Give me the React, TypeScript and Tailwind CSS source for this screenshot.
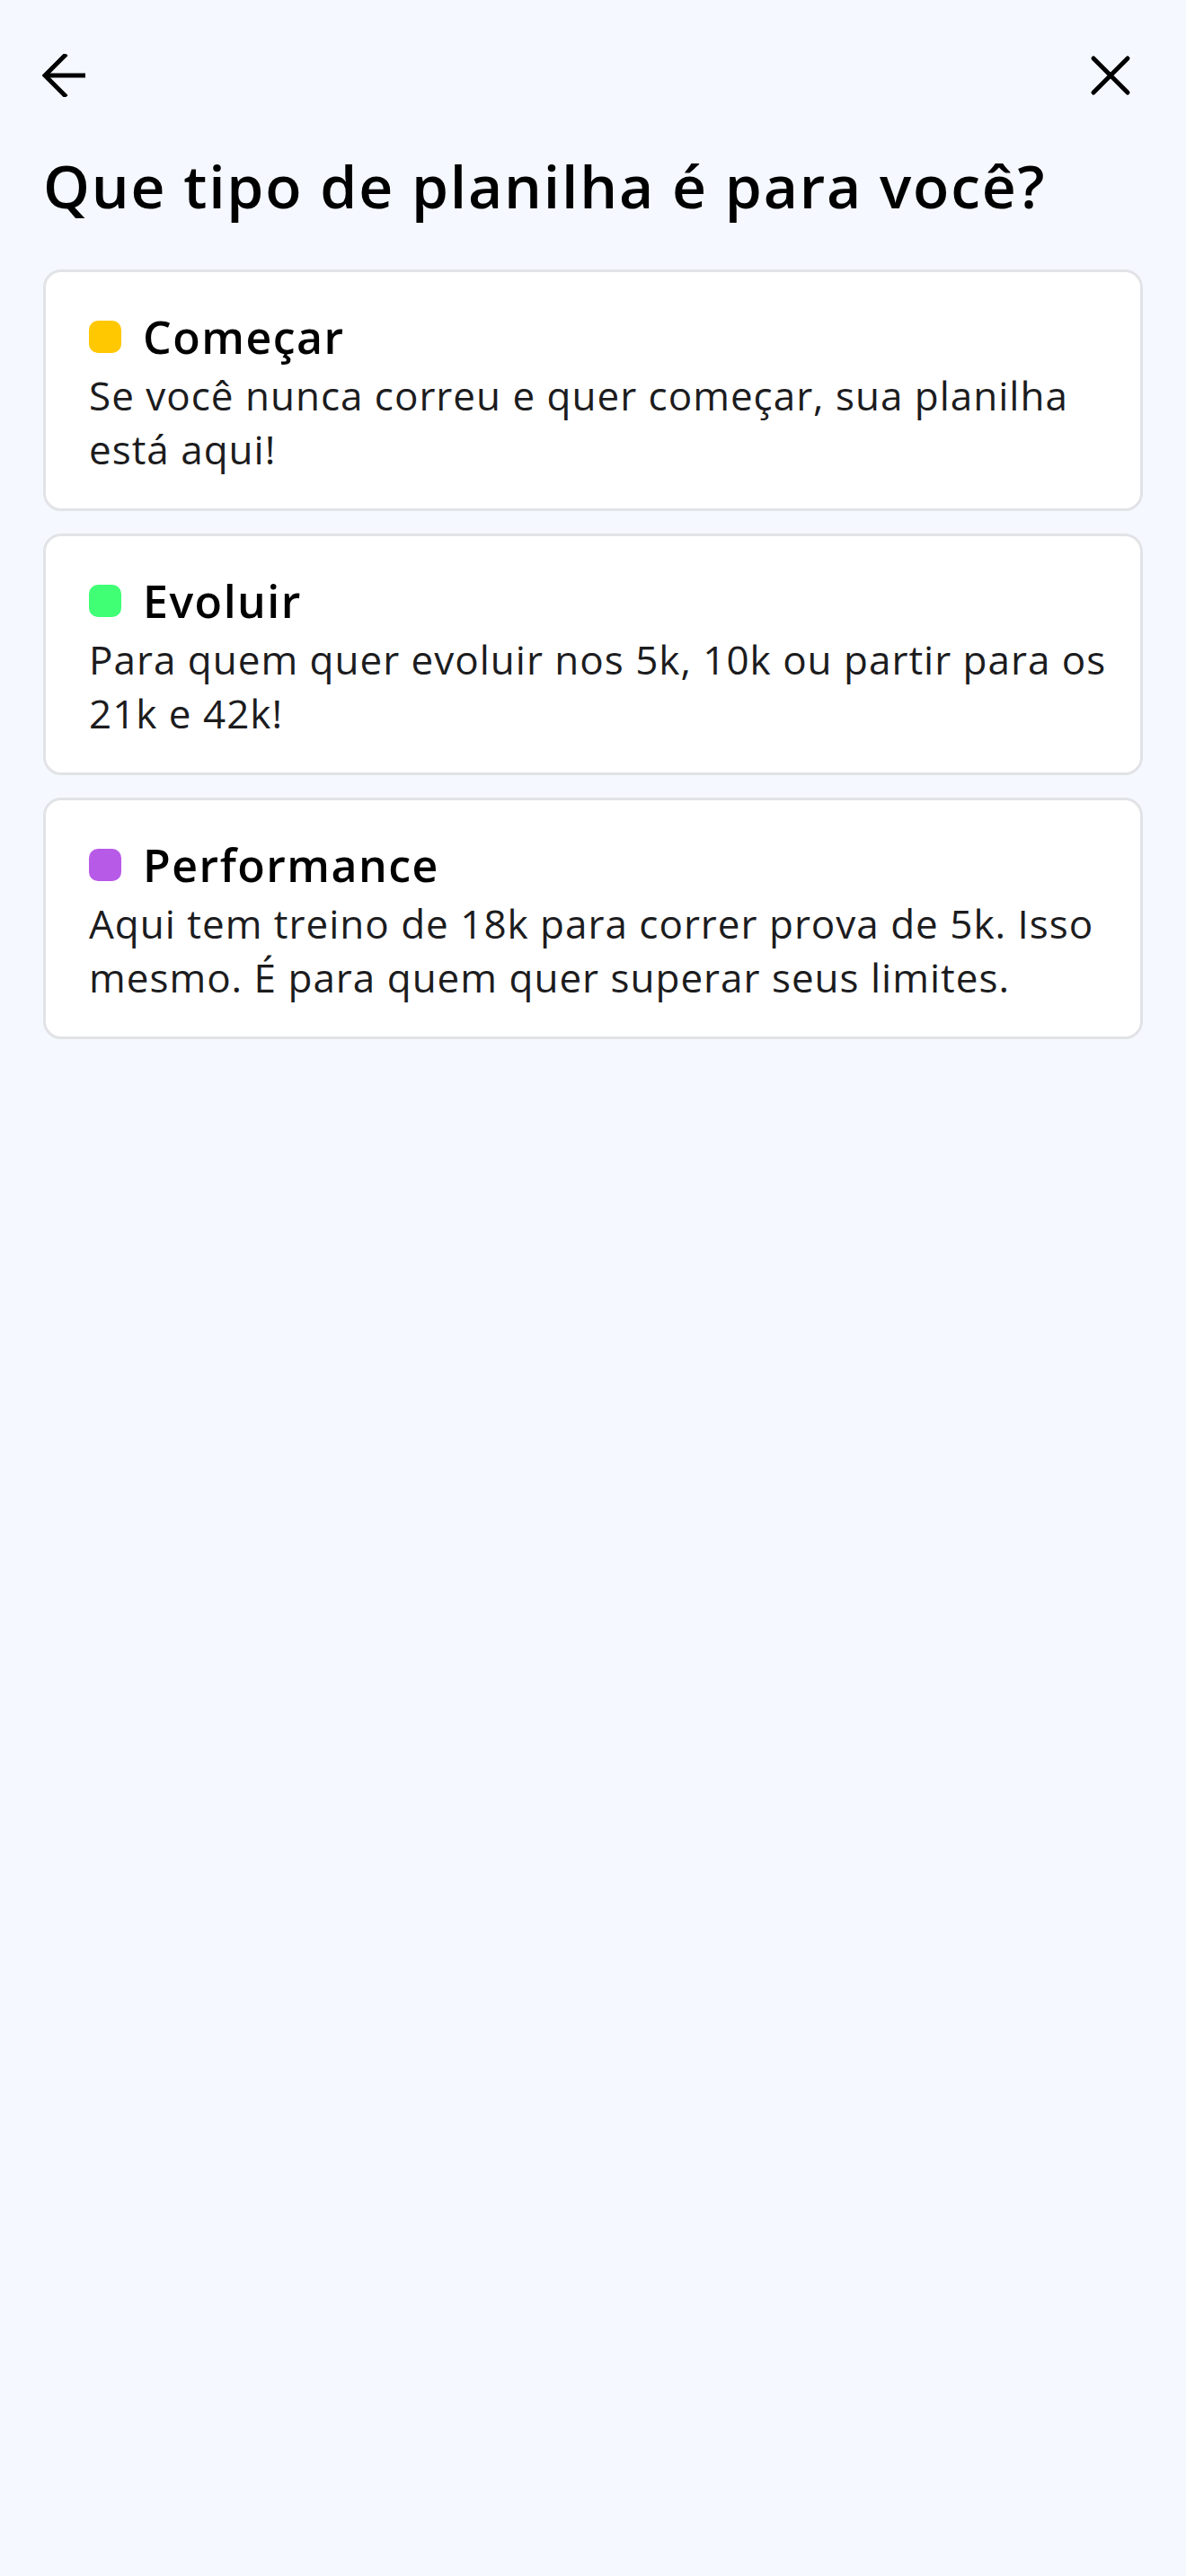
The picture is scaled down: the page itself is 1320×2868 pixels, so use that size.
import React from 'react';

// lines are split as in the design so wrapping matches
const plans = [
  {
    title: 'Começar',
    color: 'bg-[#ffc800]',
    lines: ['Se você nunca correu e quer começar, sua planilha', 'está aqui!'],
  },
  {
    title: 'Evoluir',
    color: 'bg-[#40ff75]',
    lines: ['Para quem quer evoluir nos 5k, 10k ou partir para os', '21k e 42k!'],
  },
  {
    title: 'Performance',
    color: 'bg-[#b85ae8]',
    lines: ['Aqui tem treino de 18k para correr prova de 5k. Isso', 'mesmo. É para quem quer superar seus limites.'],
  },
];

const BackIcon = () => (
  <svg width="48" height="48" viewBox="0 0 48 48" fill="none" stroke="black" strokeWidth="5">
    <path d="M48 24H4" strokeLinecap="butt" />
    <path d="M25 2L3 24l22 22" strokeLinecap="square" />
  </svg>
);

const CloseIcon = () => (
  <svg width="48" height="48" viewBox="0 0 48 48" fill="none" stroke="black" strokeWidth="5" strokeLinecap="round">
    <path d="M5 5l38 38M43 5L5 43" />
  </svg>
);

const App = () => {
  return (
    <div className="min-h-screen bg-[#f5f8fe] px-[48px] pt-[60px] font-['Open_Sans',sans-serif] text-black">
      <div className="flex items-center justify-between">
        <button className="-ml-[1px]">
          <BackIcon />
        </button>
        <button className="mr-[12px]">
          <CloseIcon />
        </button>
      </div>

      <h1 className="mt-[58px] text-[66px] font-semibold leading-[80px] tracking-[1.8px]">
        Que tipo de planilha é para você?
      </h1>

      <div className="mt-[54px] flex flex-col gap-[25px]">
        {plans.map((p) => (
          <div
            key={p.title}
            className="rounded-[20px] border-[3px] border-[#e2e3e6] bg-white px-[48px] pt-[43px] pb-[36px]"
          >
            <div className="flex items-center gap-[24px]">
              <span className={`h-[36px] w-[36px] shrink-0 rounded-[10px] ${p.color}`} />
              <h2 className="text-[50px] font-semibold leading-[58px] tracking-[1.5px]">{p.title}</h2>
            </div>
            <p className="mt-[6px] text-[44px] leading-[60px] tracking-[1px] text-[#1c1c1e]">
              {p.lines.map((l) => (
                <span key={l} className="block whitespace-nowrap">
                  {l}
                </span>
              ))}
            </p>
          </div>
        ))}
      </div>
    </div>
  );
};

export default App;
